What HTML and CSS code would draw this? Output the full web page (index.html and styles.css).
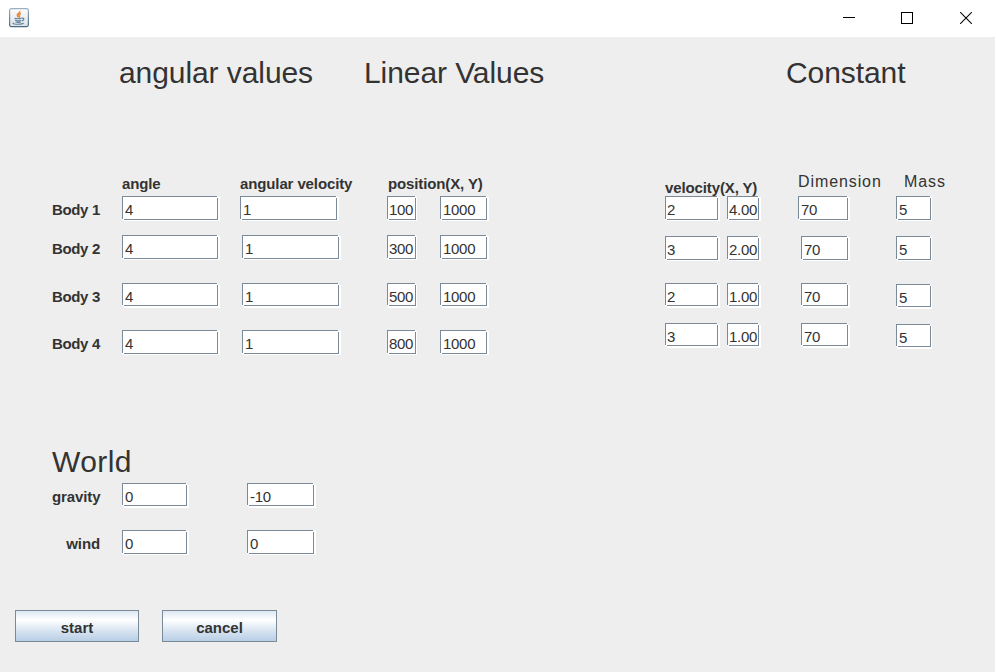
FILE: index.html
```html
<!DOCTYPE html>
<html lang="en">
<head>
<meta charset="utf-8">
<title>Simulation values</title>
<link rel="stylesheet" href="styles.css">
</head>
<body>
<div class="window">
  <header class="titlebar">
    <svg class="app-icon" width="20" height="20" viewBox="0 0 20 20">
      <defs><linearGradient id="plate" x1="0" y1="0" x2="0" y2="1"><stop offset="0" stop-color="#fdfdfd"/><stop offset="1" stop-color="#dce1e5"/></linearGradient>
      <linearGradient id="rim" x1="0" y1="0" x2="0" y2="1"><stop offset="0" stop-color="#9bb0c1"/><stop offset="1" stop-color="#4b6a83"/></linearGradient></defs>
      <rect x=".6" y=".6" width="18.8" height="18" rx="1.8" fill="url(#plate)" stroke="url(#rim)" stroke-width="1.2"/>
      <path d="M10.800 3C11.500 5 7.600 5.800 8.300 7.600C8.600 8.500 9.400 8.800 9.300 9.700M12 5.500C9.700 6.400 9.500 7.200 10.300 8C10.900 8.700 10.200 9.200 9.800 9.700" fill="none" stroke="#ee8a38" stroke-width="1.500"/>
      <path d="M5.500 10.300Q9 11.200 12.600 10.200M6 12.300Q9 13.300 12.200 12.200M6.500 14Q9 14.800 11.700 13.900M13 10.300C15.600 9.600 15.300 12.400 12.800 12.800M4.600 14.700C2.500 15.800 7 16.600 11 16.100C13.500 15.800 14.600 15.400 14.500 14.800" fill="none" stroke="#6485a0" stroke-width="1.200"/>
    </svg>
    <div class="controls">
      <svg width="18" height="12" viewBox="0 0 18 12" shape-rendering="crispEdges"><path d="M3 5.500H15" stroke="#000"/></svg>
      <svg width="18" height="12" viewBox="0 0 18 12" shape-rendering="crispEdges"><rect x="3.500" y=".5" width="11" height="11" fill="none" stroke="#000"/></svg>
      <svg class="close" width="18" height="12" viewBox="0 0 18 12"><path d="M3.200 .2L14.800 11.800M14.800 .2L3.200 11.800" stroke="#000" stroke-width="1.100"/></svg>
    </div>
  </header>
  <main class="panel">
    <div class="headings">
      <h1 class="h-angular">angular values</h1>
      <h1 class="h-linear">Linear Values</h1>
      <h1 class="h-constant">Constant</h1>
    </div>
    <section class="bodies">
      <div class="col names rows-a"><b></b><b>Body 1</b><b>Body 2</b><b>Body 3</b><b>Body 4</b></div>
      <div class="col angle rows-a"><b>angle</b><span class="field">4</span><span class="field">4</span><span class="field">4</span><span class="field">4</span></div>
      <div class="col spin rows-a"><b>angular velocity</b><span class="field first">1</span><span class="field">1</span><span class="field">1</span><span class="field">1</span></div>
      <div class="col pos-x rows-a"><b>position(X, Y)</b><span class="field">100</span><span class="field">300</span><span class="field">500</span><span class="field">800</span></div>
      <div class="col pos-y rows-a"><b></b><span class="field">1000</span><span class="field">1000</span><span class="field">1000</span><span class="field">1000</span></div>
      <div class="col vel-x rows-b"><b>velocity(X, Y)</b><span class="field">2</span><span class="field">3</span><span class="field">2</span><span class="field">3</span></div>
      <div class="col vel-y rows-b"><b></b><span class="field">4.00</span><span class="field">2.00</span><span class="field">1.00</span><span class="field">1.00</span></div>
      <div class="col dim rows-b"><i>Dimension</i><span class="field first">70</span><span class="field">70</span><span class="field">70</span><span class="field">70</span></div>
      <div class="col mass rows-c"><i>Mass</i><span class="field">5</span><span class="field">5</span><span class="field">5</span><span class="field">5</span></div>
    </section>
    <section class="world">
      <h1>World</h1>
      <div class="world-row"><b>gravity</b><span class="field short">0</span><span class="field wide short">-10</span></div>
      <div class="world-row"><b>wind</b><span class="field">0</span><span class="field wide">0</span></div>
    </section>
    <div class="actions">
      <button class="start">start</button>
      <button class="cancel">cancel</button>
    </div>
  </main>
</div>
</body>
</html>
```
FILE: styles.css
```css
* { box-sizing: border-box; }
body {
  margin: 0;
  background: #fff;
  color: #333;
  font: 15px/18px "Liberation Sans", Arial, sans-serif;
}
.window { width: 995px; height: 672px; display: flex; flex-direction: column; }
.titlebar {
  height: 37px;
  flex: none;
  display: flex;
  justify-content: space-between;
  padding: 8px 20px 0 9px;
}
.controls { display: flex; gap: 40px; padding-top: 4px; }
.controls svg { flex: none; }
.controls .close { margin-left: 1px; }
.panel { flex: 1; background: #eee; overflow: hidden; }
h1 {
  margin: 0;
  font-size: 30px;
  line-height: 34px;
  font-weight: normal;
  letter-spacing: -0.080px;
  white-space: nowrap;
}
b, i { font-style: normal; white-space: nowrap; letter-spacing: -0.120px; }

.headings { display: flex; height: 123px; padding: 19px 0 0 119px; }
.h-angular { width: 245px; }
.h-linear { width: 422px; }

.bodies { display: flex; height: 284px; padding-left: 52px; }
.col {
  display: grid;
  grid-template-columns: 100%;
  align-content: start;
  align-items: start;
  flex: none;
}
.rows-a { grid-template-rows: 36px 39px 48px 47px 24px; }
.rows-b { grid-template-rows: 36px 40px 47px 40px 24px; }
.rows-c { grid-template-rows: 36px 40px 48px 40px 24px; }
.col > :first-child { padding-top: 15px; }
.names b:not(:first-child) { padding-top: 5px; letter-spacing: -0.350px; }
.names { width: 70px; }
.angle { width: 96px; }
.spin { width: 97px; margin-left: 24px; }
.spin .first { width: 97px; margin-left: -2px; }
.spin b { margin-left: -2px; }
.pos-x { width: 29px; margin-left: 48px; }
.pos-x b { margin-left: 1px; }
.pos-y { width: 47px; margin-left: 24px; }
.vel-x { width: 53px; margin-left: 178px; }
.vel-x > b:first-child { padding-top: 19px; }
.vel-y { width: 32px; margin-left: 9px; }
.dim { width: 47px; margin-left: 42px; }
.dim .first, .dim i { margin-left: -3px; }
.mass { width: 35px; margin-left: 48px; }
.mass i { margin-left: 8px; }
.col > i:first-child { padding-top: 13px; font-size: 16px; letter-spacing: 0.900px; }

.field {
  height: 24px;
  padding: 5px 0 0 3px;
  white-space: nowrap;
  letter-spacing: -0.300px;
  background:
    linear-gradient(#7a8a99, #7a8a99) 0 0 / calc(100% - 1px) 1px no-repeat,
    linear-gradient(#7a8a99, #7a8a99) 0 0 / 1px calc(100% - 1px) no-repeat,
    linear-gradient(#7a8a99, #7a8a99) 100% 100% / 1px calc(100% - 2px) no-repeat,
    linear-gradient(#7a8a99, #7a8a99) 100% 100% / calc(100% - 2px) 1px no-repeat,
    #fff;
  box-shadow: 2px 1px 0 #fff;
}
.pos-x .field, .mass .field { box-shadow: 1px 1px 0 #fff; }
.field.short, .col .field:nth-child(4),
.rows-b .field:nth-child(5), .rows-c .field:nth-child(5) {
  height: 23px;
  box-shadow: 2px 2px 0 #fff;
}
.pos-x .field:nth-child(4), .mass .field:nth-child(n+4) { box-shadow: 1px 2px 0 #fff; }
.pos-x .field, .vel-x .field, .vel-y .field { padding-left: 2px; }

.world { height: 166px; padding-left: 52px; }
.world h1 { height: 39px; padding-top: 1px; letter-spacing: 0.400px; }
.world-row { display: flex; height: 47px; }
.world-row b { width: 48px; margin-right: 22px; padding-top: 5px; text-align: right; }
.world-row .field { width: 65px; }
.world-row .wide { width: 67px; margin-left: 60px; }

.actions { display: flex; gap: 23px; padding-left: 15px; }
button {
  height: 32px;
  padding: 4px 0 0;
  border: 1px solid #7a8a99;
  background: linear-gradient(#dde8f3, #fff 30%, #dde8f3 60%, #b8cfe5);
  color: #333;
  font: bold 15px/18px "Liberation Sans", Arial, sans-serif;
}
.start { width: 124px; }
.cancel { width: 115px; }
```
